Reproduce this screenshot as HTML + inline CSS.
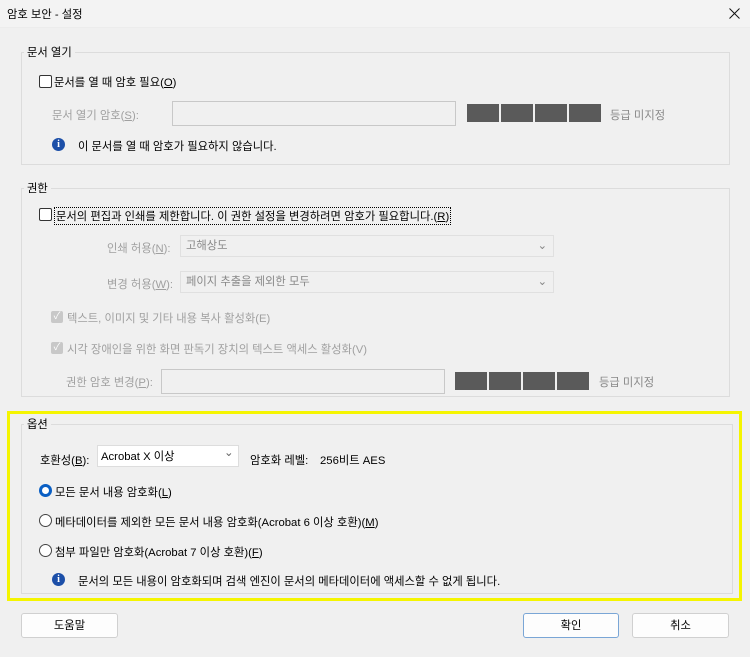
<html><head><style>
body{margin:0;width:750px;height:657px;background:#f0f0f0;font-family:"Liberation Sans","Noto Sans CJK KR",sans-serif;font-size:11.3px;color:#000;position:relative;overflow:hidden}
.a{position:absolute;white-space:nowrap}
.g{position:absolute;border:1px solid #dcdcdc}
.lg{position:absolute;background:#f0f0f0;padding:0 3px}
.dis{color:#a0a0a0}
.cb{position:absolute;width:11px;height:11px;border:1px solid #333;border-radius:2px;background:#fff}
.cbd{position:absolute;width:12px;height:12px;border-radius:2px;background:#c8c8c8;color:#fff;font-size:10px;line-height:12px;text-align:center}
.tb{position:absolute;border:1px solid #c8c8c8;background:#f0f0f0}
.dd{position:absolute;border:1px solid #e0e0e0;background:#f0f0f0;color:#888;padding-left:5px;line-height:20px;box-sizing:border-box}
.bars{position:absolute;display:flex;gap:2px}
.bars div{width:32px;height:18px;background:#5a5a5a}
.info{position:absolute;width:13px;height:13px;border-radius:50%;background:#1c4fa8;color:#fff;font-size:10px;font-weight:bold;text-align:center;line-height:13px;font-family:"Liberation Serif",serif}
.rb{position:absolute;width:11px;height:11px;border:1px solid #444;border-radius:50%;background:#fff}
.btn{position:absolute;height:25px;border:1px solid #d0d0d0;background:#fdfdfd;border-radius:3px;text-align:center;line-height:25px;box-sizing:border-box}
</style></head><body>
<div class="a" style="left:0;top:0;width:750px;height:27px;background:#f3f3f3;border-bottom:1px solid #ececec"></div>
<div class="a" style="left:7px;top:6px">암호 보안 - 설정</div>
<svg class="a" style="left:729px;top:8px" width="11" height="11"><path d="M0.5 0.5L10.5 10.5M10.5 0.5L0.5 10.5" stroke="#111" stroke-width="1"/></svg>

<div class="g" style="left:21px;top:52px;width:707px;height:111px"></div>
<div class="lg" style="left:24px;top:44px">문서 열기</div>
<div class="cb" style="left:39px;top:75px"></div>
<div class="a" style="left:54px;top:74px">문서를 열 때 암호 필요(<u>O</u>)</div>
<div class="a dis" style="left:52px;top:107px">문서 열기 암호(<u>S</u>):</div>
<div class="tb" style="left:172px;top:101px;width:282px;height:23px"></div>
<div class="bars" style="left:467px;top:104px"><div></div><div></div><div></div><div></div></div>
<div class="a dis" style="left:610px;top:107px;color:#888">등급 미지정</div>
<div class="info" style="left:52px;top:138px">i</div>
<div class="a" style="left:78px;top:138px">이 문서를 열 때 암호가 필요하지 않습니다.</div>

<div class="g" style="left:21px;top:188px;width:707px;height:207px"></div>
<div class="lg" style="left:24px;top:180px">권한</div>
<div class="cb" style="left:39px;top:208px"></div>
<div class="a" style="left:54px;top:207px;border:1px dotted #000;padding:0 1px">문서의 편집과 인쇄를 제한합니다. 이 권한 설정을 변경하려면 암호가 필요합니다.(<u>R</u>)</div>
<div class="a dis" style="left:107px;top:240px">인쇄 허용(<u>N</u>):</div>
<div class="dd" style="left:180px;top:235px;width:374px;height:22px">고해상도<span style="position:absolute;right:6px">⌄</span></div>
<div class="a dis" style="left:107px;top:276px">변경 허용(<u>W</u>):</div>
<div class="dd" style="left:180px;top:271px;width:374px;height:22px">페이지 추출을 제외한 모두<span style="position:absolute;right:6px">⌄</span></div>
<div class="cbd" style="left:51px;top:311px">✓</div>
<div class="a dis" style="left:67px;top:310px">텍스트, 이미지 및 기타 내용 복사 활성화(E)</div>
<div class="cbd" style="left:51px;top:342px">✓</div>
<div class="a dis" style="left:67px;top:341px">시각 장애인을 위한 화면 판독기 장치의 텍스트 액세스 활성화(V)</div>
<div class="a dis" style="left:66px;top:374px">권한 암호 변경(<u>P</u>):</div>
<div class="tb" style="left:161px;top:369px;width:282px;height:23px"></div>
<div class="bars" style="left:455px;top:372px"><div></div><div></div><div></div><div></div></div>
<div class="a" style="left:599px;top:374px;color:#888">등급 미지정</div>

<div class="a" style="left:7px;top:411px;width:729px;height:184px;border:3px solid #f5f500"></div>
<div class="g" style="left:21px;top:424px;width:710px;height:168px"></div>
<div class="lg" style="left:24px;top:416px">옵션</div>
<div class="a" style="left:40px;top:452px">호환성(<u>B</u>):</div>
<div class="a" style="left:97px;top:445px;width:140px;height:20px;background:#fff;border:1px solid #ddd"></div>
<div class="a" style="left:101px;top:448px">Acrobat X 이상</div>
<div class="a" style="left:224px;top:446px;color:#666">⌄</div>
<div class="a" style="left:250px;top:452px">암호화 레벨:</div>
<div class="a" style="left:320px;top:452px">256비트 AES</div>
<div class="a" style="left:39px;top:484px;width:7px;height:7px;border:3px solid #0a5fc4;border-radius:50%;background:#fff"></div>
<div class="a" style="left:55px;top:484px">모든 문서 내용 암호화(<u>L</u>)</div>
<div class="rb" style="left:39px;top:514px"></div>
<div class="a" style="left:55px;top:514px">메타데이터를 제외한 모든 문서 내용 암호화(Acrobat 6 이상 호환)(<u>M</u>)</div>
<div class="rb" style="left:39px;top:544px"></div>
<div class="a" style="left:55px;top:544px">첨부 파일만 암호화(Acrobat 7 이상 호환)(<u>F</u>)</div>
<div class="info" style="left:52px;top:573px">i</div>
<div class="a" style="left:78px;top:573px">문서의 모든 내용이 암호화되며 검색 엔진이 문서의 메타데이터에 액세스할 수 없게 됩니다.</div>

<div class="btn" style="left:21px;top:613px;width:97px">도움말</div>
<div class="btn" style="left:523px;top:613px;width:96px;border-color:#7aa6d6">확인</div>
<div class="btn" style="left:632px;top:613px;width:97px">취소</div>
</body></html>
